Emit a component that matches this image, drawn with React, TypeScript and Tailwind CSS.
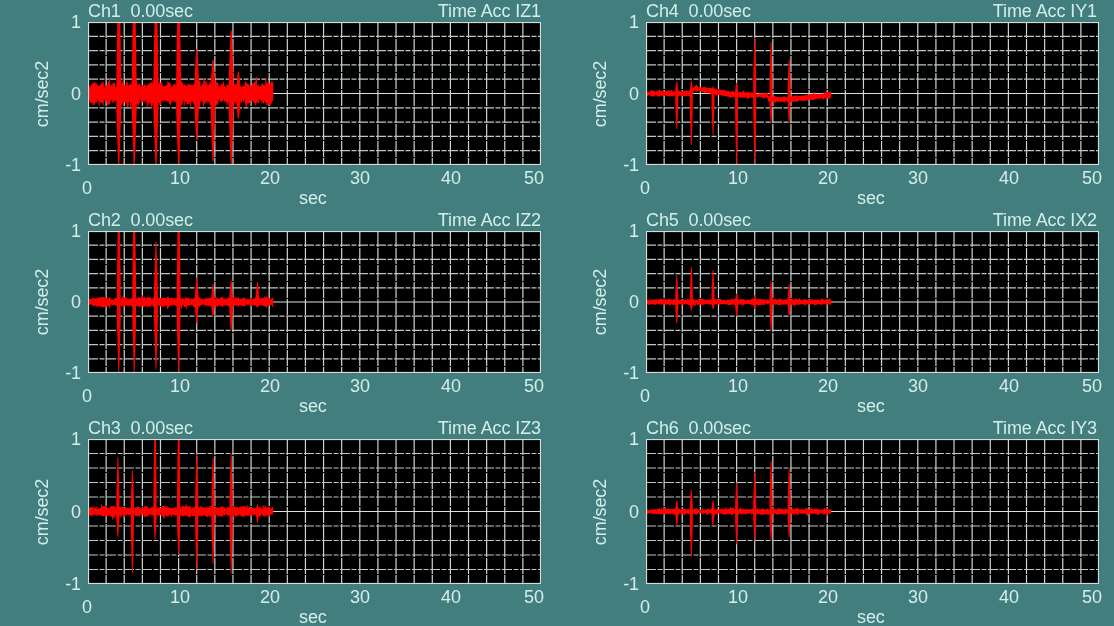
const W = 453;
const PX_PER_SEC = 9.06;

type Spike = [number, number, number];
type Channel = {
  title: string;
  name: string;
  height: number;
  noise: number;
  spikeWidth: number;
  drift?: boolean;
  spikes: Spike[];
  seed: number;
};

function rng(seed: number) {
  let s = seed;
  return () => {
    s = (s * 1664525 + 1013904223) % 4294967296;
    return s / 4294967296;
  };
}

function drift(t: number) {
  if (t < 4.8) return 0;
  if (t < 5.4) return 0.07 * ((t - 4.8) / 0.6);
  if (t < 9) return 0.07 * (1 - (t - 5.4) / 3.6);
  if (t < 13.5) return -0.01 - 0.02 * ((t - 9) / 4.5);
  if (t < 16) return -0.08;
  return -0.08 + 0.06 * ((t - 16) / 4.4);
}

function trace(ch: Channel) {
  const r = rng(ch.seed);
  const mid = ch.height / 2;
  const amp = ch.height / 2;
  let d = "";
  const steps = 740;
  let slow = 0.7;
  for (let i = 0; i <= steps; i++) {
    const t = (i / steps) * 20.4;
    if (i % 9 === 0) slow = 0.55 + 0.45 * r();
    const burst = r() > 0.95 ? 1.35 : 1;
    const base = ch.drift ? drift(t) : 0;
    const sign = i % 2 === 0 ? 1 : -1;
    const y = mid - (base + sign * ch.noise * slow * burst * (0.6 + 0.4 * r())) * amp;
    d += `${i === 0 ? "M" : "L"}${(t * PX_PER_SEC).toFixed(2)} ${y.toFixed(1)}`;
  }
  return d;
}

function spikePoints(x: number, mid: number, amp: number, up: number, down: number, width: number) {
  const tip = (value: number) => Math.max(0.9, value >= 0.9 ? width * 0.75 : width * 0.3);
  const topY = mid - up * amp;
  const botY = mid - down * amp;
  const core = width / 2 + 0.4;
  const t = tip(up) / 2;
  const b = tip(down) / 2;
  return [
    `${x - t},${topY}`,
    `${x + t},${topY}`,
    `${x + core},${mid - up * 0.25 * amp}`,
    `${x + core},${mid - down * 0.25 * amp}`,
    `${x + b},${botY}`,
    `${x - b},${botY}`,
    `${x - core},${mid - down * 0.25 * amp}`,
    `${x - core},${mid - up * 0.25 * amp}`,
  ].join(" ");
}

const channels: Channel[][] = [
  [
    {
      title: "Ch1",
      name: "Time Acc IZ1",
      height: 143,
      noise: 0.19,
      spikeWidth: 4,
      seed: 11,
      spikes: [
        [3.4, 1, -1],
        [5.1, 1, -1],
        [7.5, 1, -1],
        [10, 1, -1],
        [12, 0.62, -0.65],
        [13.8, 0.47, -0.95],
        [15.8, 0.88, -1],
        [16.6, 0.3, -0.35],
      ],
    },
    {
      title: "Ch2",
      name: "Time Acc IZ2",
      height: 142,
      noise: 0.08,
      spikeWidth: 3,
      seed: 23,
      spikes: [
        [3.4, 1, -1],
        [5.1, 1, -1],
        [7.5, 0.85, -0.95],
        [10, 1, -1],
        [12, 0.35, -0.3],
        [13.8, 0.25, -0.2],
        [15.8, 0.3, -0.4],
        [18.7, 0.28, -0.08],
      ],
    },
    {
      title: "Ch3",
      name: "Time Acc IZ3",
      height: 145,
      noise: 0.085,
      spikeWidth: 2.4,
      seed: 37,
      spikes: [
        [3.3, 0.75, -0.35],
        [4.9, 0.57, -0.85],
        [7.4, 1, -0.38],
        [10, 1, -0.6],
        [12, 0.8, -0.8],
        [13.8, 0.75, -0.72],
        [15.8, 0.8, -0.85],
        [18.7, 0.1, -0.15],
      ],
    },
  ],
  [
    {
      title: "Ch4",
      name: "Time Acc IY1",
      height: 143,
      noise: 0.05,
      spikeWidth: 2.2,
      drift: true,
      seed: 41,
      spikes: [
        [3.4, 0.17, -0.5],
        [5, 0.18, -0.72],
        [7.4, 0.1, -0.58],
        [10, 0.15, -1],
        [12, 0.78, -1],
        [13.8, 0.72, -0.42],
        [15.8, 0.48, -0.42],
      ],
    },
    {
      title: "Ch5",
      name: "Time Acc IX2",
      height: 142,
      noise: 0.05,
      spikeWidth: 2.2,
      seed: 53,
      spikes: [
        [3.4, 0.38, -0.3],
        [5, 0.5, -0.12],
        [7.4, 0.45, -0.1],
        [10, 0.12, -0.2],
        [12, 0.1, -0.1],
        [13.8, 0.3, -0.4],
        [15.8, 0.25, -0.2],
      ],
    },
    {
      title: "Ch6",
      name: "Time Acc IY3",
      height: 145,
      noise: 0.05,
      spikeWidth: 2.2,
      seed: 67,
      spikes: [
        [3.4, 0.15, -0.2],
        [5, 0.3, -0.62],
        [7.4, 0.15, -0.2],
        [10, 0.4, -0.45],
        [12, 0.55, -0.4],
        [13.8, 0.7, -0.4],
        [15.8, 0.6, -0.35],
      ],
    },
  ],
];

const xTicks: [string, string][] = [
  ["10", "left-[82px]"],
  ["20", "left-[172px]"],
  ["30", "left-[262px]"],
  ["40", "left-[353px]"],
  ["50", "left-[436px]"],
];

function Plot({ ch }: { ch: Channel }) {
  const h = ch.height;
  const vLines = Array.from({ length: 24 }, (_, i) => ((i + 1) * W) / 25);
  const hLines = Array.from({ length: 9 }, (_, i) => ((i + 1) * h) / 10);
  const mid = h / 2;
  const amp = h / 2;
  return (
    <svg width={W} height={h} viewBox={`0 0 ${W} ${h}`} className="block overflow-hidden">
      <rect x="0" y="0" width={W} height={h} fill="#000000" />
      {vLines.map((x) => (
        <line key={x} x1={x} x2={x} y1="0" y2={h} stroke="#ccd4d1" strokeWidth="1.2" strokeDasharray="16 1" />
      ))}
      {hLines.map((y, i) => (
        <line
          key={y}
          x1="0"
          x2={W}
          y1={y}
          y2={y}
          stroke={i === 4 ? "#d8dedb" : "#bcc7c3"}
          strokeWidth="1.2"
          strokeDasharray={i === 4 ? undefined : "10 1.5 5 1.5"}
        />
      ))}
      <path d={trace(ch)} fill="none" stroke="#ff0000" strokeWidth="1.1" />
      {ch.spikes.map(([t, up, down]) => (
        <polygon key={t} points={spikePoints(t * PX_PER_SEC, mid, amp, up, down, ch.spikeWidth)} fill="#ff0000" />
      ))}
      <rect x="0.5" y="0.5" width={W - 1} height={h - 1} fill="none" stroke="#d5dcd9" strokeWidth="1.2" />
    </svg>
  );
}

function Chart({ ch }: { ch: Channel }) {
  return (
    <div className="flex h-[208.5px] flex-col">
      <div className="flex h-[22px] items-center justify-between pl-[88px] pr-[17px] leading-none">
        <span className="whitespace-pre">{`${ch.title}  0.00sec`}</span>
        <span>{ch.name}</span>
      </div>
      <div className="flex">
        <div className="relative w-[88px] shrink-0">
          <span className="absolute left-[33px] top-1/2 -translate-y-1/2 rotate-180 leading-none [writing-mode:vertical-rl]">
            cm/sec2
          </span>
          <span className="absolute right-[7px] top-[-9px] leading-none">1</span>
          <span className="absolute right-[7px] top-1/2 -translate-y-1/2 leading-none">0</span>
          <span className="absolute right-[7px] bottom-[-9px] leading-none">-1</span>
        </div>
        <Plot ch={ch} />
      </div>
      <div className="relative ml-[88px] h-[40px] w-[453px] leading-none">
        <span className="absolute left-[-6px] top-[14px]">0</span>
        {xTicks.map(([label, cls]) => (
          <span key={label} className={`absolute top-[4px] ${cls}`}>
            {label}
          </span>
        ))}
        <span className="absolute left-[211px] top-[24px]">sec</span>
      </div>
    </div>
  );
}

export default function App() {
  return (
    <div className="h-[626px] w-[1114px] overflow-hidden bg-[#437e7e]">
      <div className="grid h-[626px] w-[1114px] grid-cols-[558px_556px] font-['Liberation_Sans',Arial,sans-serif] text-[18px] tracking-[-0.1px] text-[#d3eee9] blur-[0.4px]">
        {channels.map((col) => (
          <div key={col[0].title} className="flex flex-col">
            {col.map((ch) => (
              <Chart key={ch.title} ch={ch} />
            ))}
          </div>
        ))}
      </div>
    </div>
  );
}
